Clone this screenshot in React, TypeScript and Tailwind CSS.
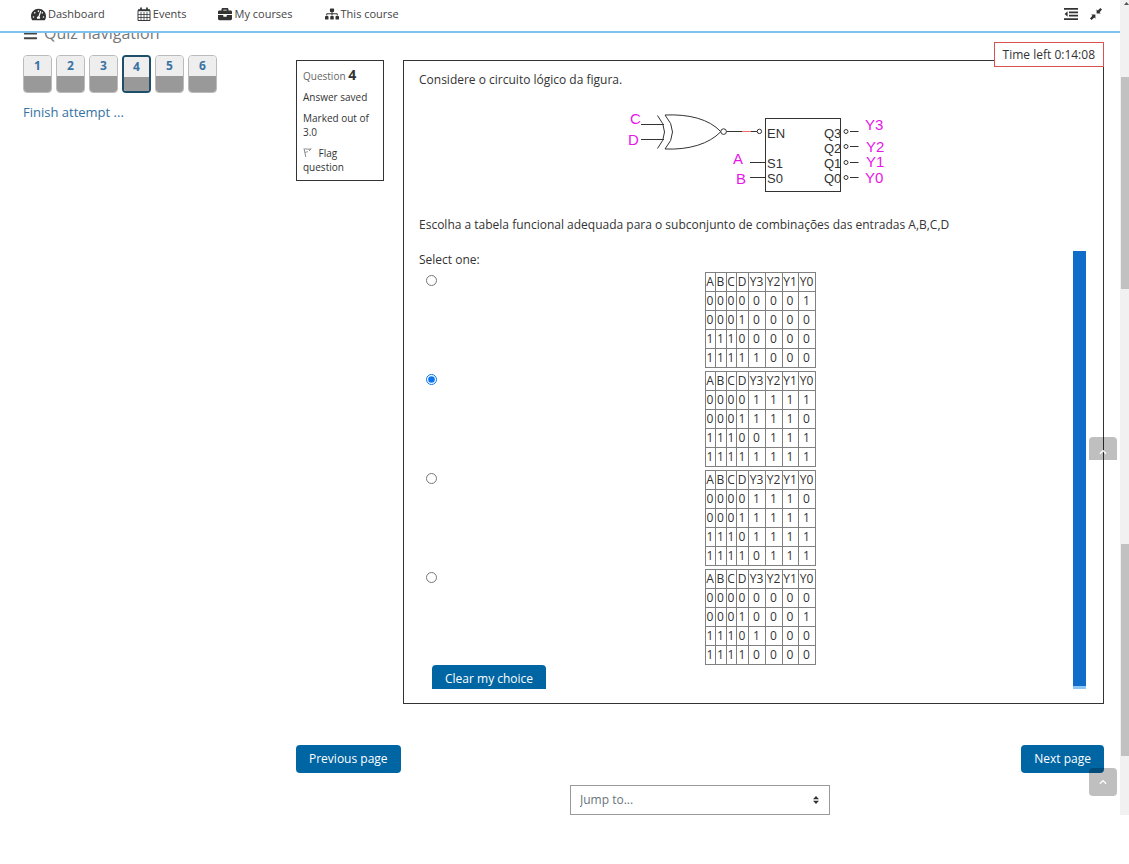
import { useState } from "react";
import type { ReactNode } from "react";
import { FaBriefcase, FaSitemap, FaTachometerAlt, FaBars, FaChevronUp } from "react-icons/fa";

const columns = ["A", "B", "C", "D", "Y3", "Y2", "Y1", "Y0"];
const columnWidths = ["w-[10px]", "w-[11px]", "w-[10px]", "w-[12px]", "w-[17px]", "w-[17px]", "w-[16px]", "w-[17px]"];

const options = [
  ["00000001", "00010000", "11100000", "11111000"],
  ["00001111", "00011110", "11100111", "11111111"],
  ["00001110", "00011111", "11101111", "11110111"],
  ["00000000", "00010001", "11101000", "11110000"],
];

function CalendarIcon() {
  return (
    <svg width="14" height="14" viewBox="0 0 14 14" fill="none" stroke="#373a3c" aria-hidden="true">
      <path d="M1 3.5h12v10H1z" />
      <path d="M1 3.2h12" strokeWidth="2" />
      <path d="M1 7.5h12M1 10.5h12M4 5v8.5M7 5v8.5M10 5v8.5" strokeWidth="0.8" />
      <path d="M4 .5v3M10 .5v3" strokeWidth="1.8" />
    </svg>
  );
}

function OutdentIcon() {
  return (
    <svg width="14" height="12" viewBox="0 0 14 12" fill="#333" aria-hidden="true">
      <path d="M0 0h14v1.8H0zM5 3.4h9v1.8H5zM5 6.8h9v1.8H5zM0 10.2h14V12H0zM3.6 3.2v5.6L.6 6z" />
    </svg>
  );
}

function CompressIcon() {
  return (
    <svg width="12" height="12" viewBox="0 0 12 12" fill="#333" aria-hidden="true">
      <path d="M6.6 1.2v4.2h4.2L9.6 4.2 12 1.6 10.4 0 7.8 2.4zM5.4 10.8V6.6H1.2l1.2 1.2L0 10.4 1.6 12l2.6-2.4z" />
    </svg>
  );
}

function FlagIcon() {
  return (
    <svg className="mr-1 inline-block align-baseline" width="9" height="9" viewBox="0 0 9 9" fill="none" stroke="#8a8a8a" aria-hidden="true">
      <path d="M1 .5 2.8 9M1.2 1.2C3 .2 5 2 8.2 .9L6 2.8M2 4.6c1.3-1 2.2-.5 3-1" />
    </svg>
  );
}

function Circuit() {
  return (
    <svg className="mx-auto block" width="264" height="88" viewBox="0 0 264 88" fill="none" stroke="#333" role="img" aria-label="Circuito lógico">
      <path d="M16 16.5h23M16 31.5h23M32.5 7.5Q46.5 24 32.5 40.5M40 7Q55 24 40 41" />
      <path d="M40 7C64 6 84 11 95.8 23.7C84 36 64 42 40 41" />
      <circle cx="98.6" cy="23.6" r="2.8" />
      <path d="M101.5 23.5H132" />
      <path d="M117 23.5h9" stroke="#f26a6a" />
      <circle cx="134.4" cy="23.4" r="2.2" />
      <rect x="140.5" y="10.5" width="75" height="73" />
      <path d="M125 54.5h15M125 69.5h15" />
      {[23.5, 38.5, 54.5, 69.5].map((y) => (
        <g key={y}>
          <circle cx="221" cy={y} r="2" />
          <path d={`M225 ${y}h8.5`} />
        </g>
      ))}
      <g className="font-['Liberation_Sans',sans-serif] text-[13px]" fill="#333" stroke="none">
        <text x="142" y="30">EN</text>
        <text x="142" y="60">S1</text>
        <text x="142" y="75">S0</text>
        <text x="199" y="30">Q3</text>
        <text x="199" y="45">Q2</text>
        <text x="199" y="60">Q1</text>
        <text x="199" y="75">Q0</text>
      </g>
      <g className="font-['Liberation_Sans',sans-serif] text-[15px]" fill="#e815e8" stroke="none">
        <text x="5" y="16">C</text>
        <text x="3" y="37">D</text>
        <text x="108" y="56">A</text>
        <text x="111" y="76">B</text>
        <text x="240" y="22">Y3</text>
        <text x="241" y="44">Y2</text>
        <text x="241" y="59">Y1</text>
        <text x="240" y="75">Y0</text>
      </g>
    </svg>
  );
}

function NavLink({ icon, children }: { icon: ReactNode; children: ReactNode }) {
  return (
    <a href="#" className="flex items-center gap-[2px] text-[11px] text-[#444]">
      {icon}
      {children}
    </a>
  );
}

function TruthTable({ id, rows }: { id: string; rows: string[] }) {
  return (
    <table id={id} className="mx-auto w-[111px] table-fixed border-collapse text-center text-[12px] leading-[18px] text-[#333]">
      <thead>
        <tr>
          {columns.map((name, i) => (
            <th key={name} className={`${columnWidths[i]} border border-[#808080] p-0 font-normal`}>
              <span className="flex justify-center">{name}</span>
            </th>
          ))}
        </tr>
      </thead>
      <tbody>
        {rows.map((row) => (
          <tr key={row}>
            {row.split("").map((bit, i) => (
              <td key={i} className="border border-[#808080] p-0">
                {bit}
              </td>
            ))}
          </tr>
        ))}
      </tbody>
    </table>
  );
}

export default function App() {
  const [choice, setChoice] = useState(1);
  const button = "h-7 rounded bg-[#0065a3] px-[13px] text-[12px] font-medium text-white";

  return (
    <div className="flex items-start bg-white font-['Open_Sans',sans-serif] text-[12px] text-[#333]">
      <div className="relative min-w-0 flex-1">
        <header className="flex h-[33px] items-center justify-between border-b-2 border-[#7cc4ef] pr-[18px] pb-[3px] pl-[31px]">
          <nav className="flex items-center gap-8">
            <NavLink icon={<FaTachometerAlt size={15} color="#333" />}>Dashboard</NavLink>
            <NavLink icon={<CalendarIcon />}>Events</NavLink>
            <NavLink icon={<FaBriefcase size={14} color="#333" />}>My courses</NavLink>
            <NavLink icon={<FaSitemap size={14} color="#333" />}>This course</NavLink>
          </nav>
          <div className="flex items-center gap-3">
            <button aria-label="Toggle sidebar"><OutdentIcon /></button>
            <button aria-label="Exit full screen"><CompressIcon /></button>
          </div>
        </header>

        <div className="flex overflow-hidden pr-4 pl-[23px]">
          <aside className="w-[273px] shrink-0">
            <h2 className="-mt-3 mb-[10px] flex items-center gap-[6px] text-[16px] leading-6 text-[#777]">
              <FaBars size={15} color="#444" />
              Quiz navigation
            </h2>
            <div className="flex gap-1">
              {[1, 2, 3, 4, 5, 6].map((n) => (
                <a
                  key={n}
                  href="#"
                  className={`flex h-[38px] w-[29px] flex-col overflow-hidden rounded text-center text-[12px] font-bold text-[#3a72a4] ${
                    n === 4 ? "border-2 border-[#1d4f6b]" : "border border-[#bbb]"
                  }`}
                >
                  <span className="h-5 bg-[#eee] leading-5">{n}</span>
                  <span className="flex-1 bg-[#999]" />
                </a>
              ))}
            </div>
            <a href="#" className="mt-[10px] block text-[13px] leading-[18px] text-[#3372a3]">
              Finish attempt ...
            </a>
          </aside>

          <main className="min-w-0 flex-1 pt-[27px]">
            <div className="flex items-start gap-[19px]">
              <section className="flex w-[88px] flex-col gap-[7px] border border-[#333] px-[6px] pt-[7px] pb-[6px] text-[10px] leading-[14px]">
                <h3 className="leading-[14px] text-[#666]">
                  Question <span className="text-[14px] leading-[14px] font-bold text-[#333]">4</span>
                </h3>
                <p>Answer saved</p>
                <p>Marked out of 3.0</p>
                <p>
                  <FlagIcon /> Flag question
                </p>
              </section>

              <section className="relative min-w-0 flex-1 border border-[#333] px-[15px] pb-[14px]">
                <div className="absolute -top-[19px] -right-px border border-[#d9534f] bg-white px-2 text-[12px] leading-[23px]">
                  Time left 0:14:08
                </div>
                <p className="mt-[10px] leading-[18px]">Considere o circuito lógico da figura.</p>
                <div className="mt-[19px] pl-[7px]">
                  <Circuit />
                </div>
                <p className="mt-5 leading-[18px]">
                  Escolha a tabela funcional adequada para o subconjunto de combinações das entradas A,B,C,D
                </p>
                <div className="mt-[17px] flex h-[438px] overflow-hidden pr-[2px]">
                  <fieldset className="min-w-0 flex-1">
                    <legend className="leading-[18px]">Select one:</legend>
                    <div className="mt-[3px] flex flex-col gap-[3px]">
                      {options.map((rows, i) => (
                        <div key={i} className="flex items-start pl-[7px]">
                          <input
                            type="radio"
                            name="answer"
                            aria-labelledby={`option-${i}`}
                            checked={choice === i}
                            onChange={() => setChoice(i)}
                            className="mt-[3px] size-[11px] accent-[#0b75f0]"
                          />
                          <div className="flex-1 pl-[10px]">
                            <TruthTable id={`option-${i}`} rows={rows} />
                          </div>
                        </div>
                      ))}
                    </div>
                    <button onClick={() => setChoice(-1)} className={`${button} ml-[13px]`}>
                      Clear my choice
                    </button>
                  </fieldset>
                  <div className="w-[13px] border-b-3 border-[#8cc6f5] bg-[#0f6cc8]" />
                </div>
              </section>
            </div>

            <div className="mt-[41px] flex justify-between">
              <button className={button}>Previous page</button>
              <button className={button}>Next page</button>
            </div>
            <div className="relative mx-auto mt-3 w-[260px]">
              <select aria-label="Jump to..." className="h-[30px] w-full appearance-none border border-[#999] bg-white px-[9px] text-[12px] text-[#6a737b]">
                <option>Jump to...</option>
              </select>
              <svg className="pointer-events-none absolute top-[11px] right-[11px]" width="6" height="8" viewBox="0 0 6 8" fill="#333" aria-hidden="true">
                <path d="M0 3.2 3 0l3 3.2zM0 4.800h6L3 8z" />
              </svg>
            </div>
          </main>
        </div>

        <button aria-label="Scroll to top" className="absolute top-[437px] right-[3px] flex h-[23px] w-7 items-end justify-center rounded-t bg-black/25 pb-1 text-white">
          <FaChevronUp size={8} />
        </button>
        <button aria-label="Back to top" className="absolute top-[768px] right-[3px] flex size-7 items-center justify-center rounded bg-black/25 text-white">
          <FaChevronUp size={8} />
        </button>
      </div>

      <div className="w-[9px] shrink-0 self-stretch bg-[#f1f1f1] pl-px" aria-hidden="true">
        <svg className="mt-[2px] block" width="8" height="4" viewBox="0 0 8 4" fill="#555">
          <path d="M3 3 5.5 0 8 3z" />
        </svg>
        <div className="mt-[71px] h-[212px] bg-[#c1c1c1]" />
        <div className="mt-[255px] h-[212px] bg-[#c1c1c1]" />
      </div>
    </div>
  );
}
